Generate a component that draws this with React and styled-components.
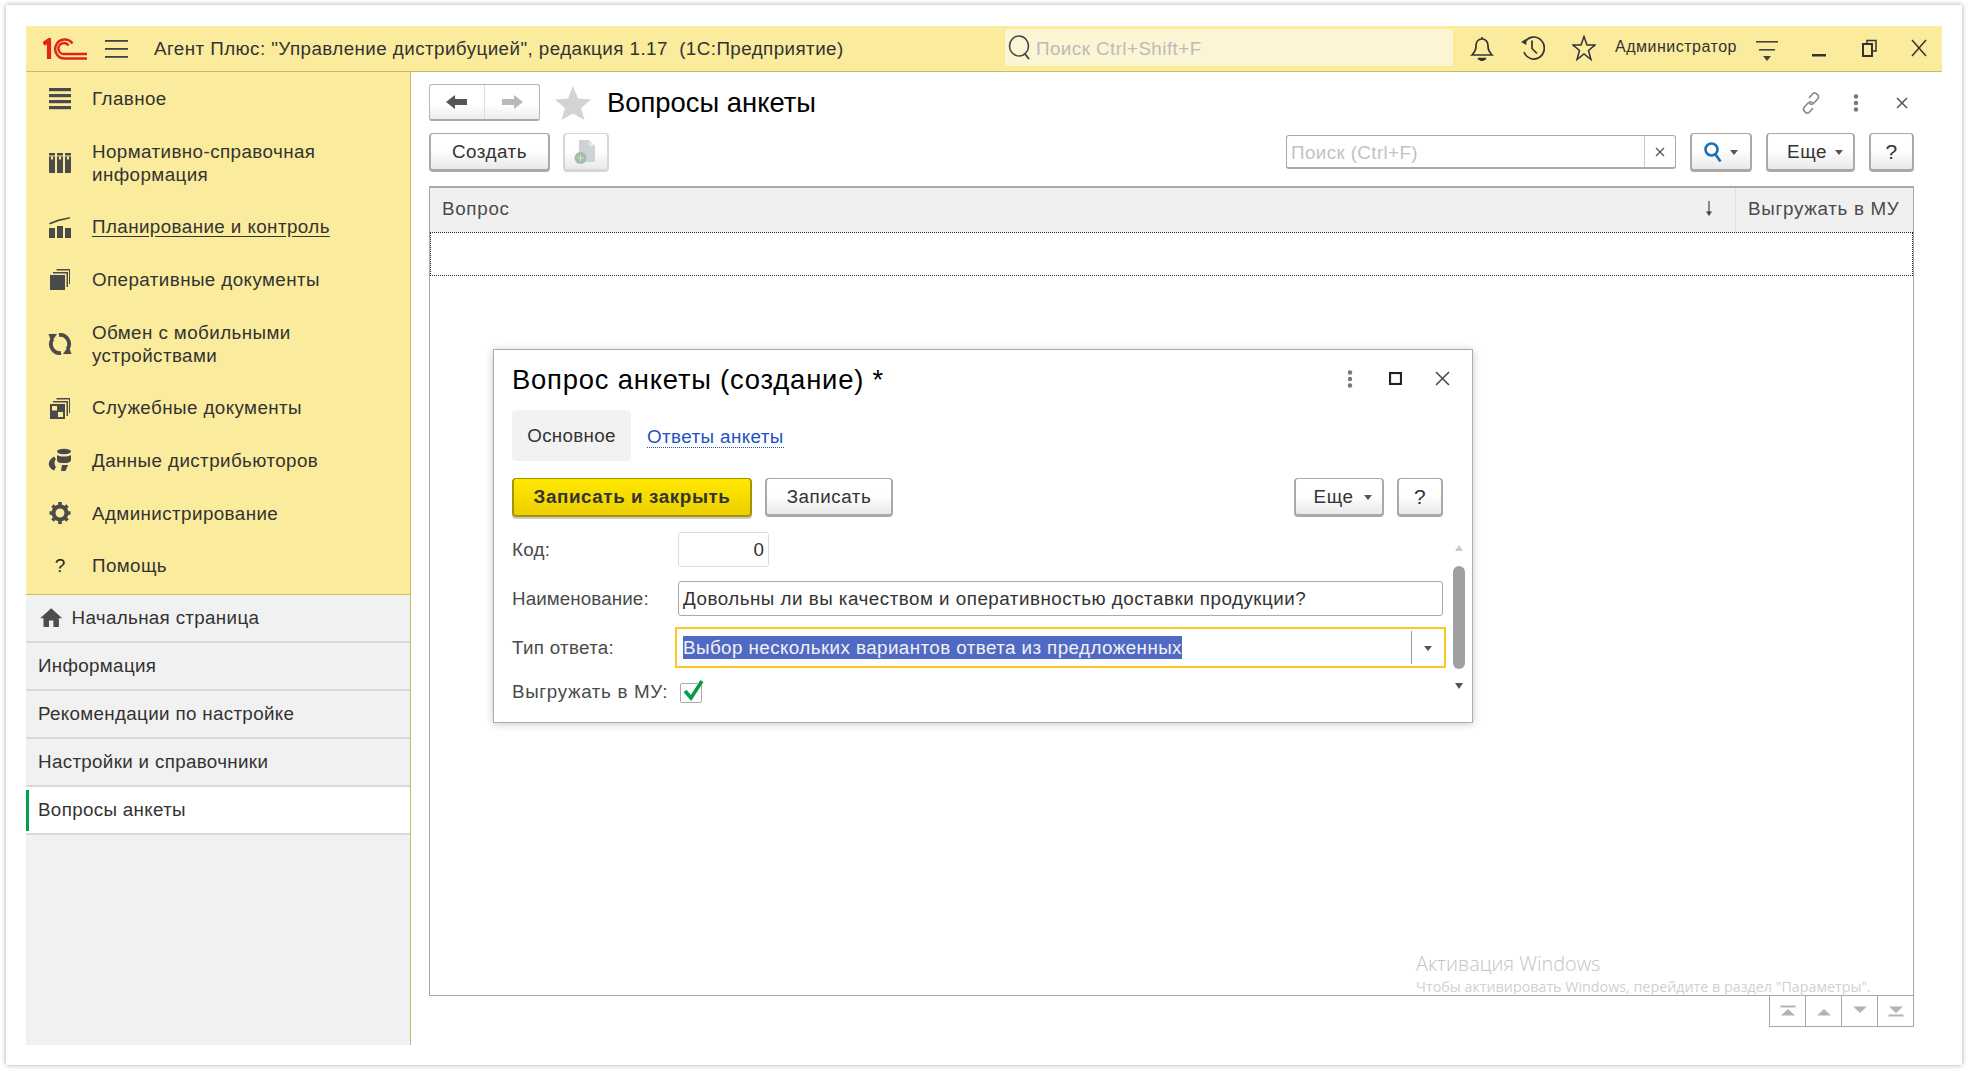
import React from "react";
import styled, { createGlobalStyle } from "styled-components";
import { MdHome } from "react-icons/md";

const Global = createGlobalStyle`
  html, body { margin: 0; padding: 0; background: #fff; }
  body { font-family: "Liberation Sans", Arial, sans-serif; color: #333; }
  * { box-sizing: border-box; }
`;

const Page = styled.div`
  width: 1968px; height: 1071px; padding: 5px 6px 6px; overflow: hidden;
`;
const Frame = styled.div`
  height: 100%; padding: 21px 20px 20px; background: #fff;
  box-shadow: 0 0 5px rgba(0,0,0,.35);
`;
const AppShell = styled.div`
  height: 100%; display: flex; flex-direction: column; position: relative;
`;
const TopBar = styled.header`
  height: 46px; flex: none; display: flex; align-items: center; background: #fbec9d;
  border-bottom: 1px solid #cdbb62; padding: 0 0 2px 17px;
`;
const Logo = styled.svg`width: 44px; height: 22px; flex: none; margin-top: 2px;`;
const Burger = styled.svg`width: 23px; height: 18px; margin-left: 18px; flex: none; margin-top: 2px;`;
const AppTitle = styled.div`
  margin-left: 26px; width: 851px; flex: none; font-size: 18.8px; letter-spacing: .44px; color: #333; white-space: pre; margin-top: 2px;
`;
const GlobalSearch = styled.div`
  width: 448px; height: 37px; flex: none; background: #fcf5d3; border-radius: 2px; display: flex; align-items: center;
  padding-left: 3px; font-size: 18.8px; color: #bbb; letter-spacing: .45px; gap: 5px;
`;
const SearchText = styled.span`margin-top: 2px;`;
const TopIcons = styled.div`
  display: flex; align-items: center; flex: 1; margin-left: 17px; position: relative;
`;
const TopIcon = styled.svg`
  width: 24px; height: 26px; flex: none; margin-right: ${p => p.$gap ?? 27}px; color: #333;
`;
const UserName = styled.div`
  font-size: 16px; color: #333; letter-spacing: .5px; width: 141px; flex: none; margin-top: -2px; margin-left: -6px; white-space: nowrap;
`;
const Body = styled.div`flex: 1; min-height: 0; display: flex;`;
const Sidebar = styled.aside`
  width: 385px; flex: none; display: flex; flex-direction: column; border-right: 1px solid #c9ba66; background: #f1f1f1;
`;
const Sections = styled.nav`background: #fbec9d; border-bottom: 1px solid #c9ba66; height: 523px; flex: none;`;
const SectionRow = styled.div`
  height: ${p => p.$two ? 75.7 : 52.7}px; display: flex; align-items: center; padding-left: 22px;
`;
const SectionIcon = styled.svg`width: 24px; height: 24px; flex: none; color: #4a4a4a;`;
const SectionText = styled.div`
  margin-left: 20px; font-size: 18.8px; line-height: 23px; letter-spacing: .42px; color: #333;
  text-decoration: ${p => p.$u ? "underline" : "none"}; text-underline-offset: 3px;
`;
const OpenRow = styled.div`
  height: 48px; display: flex; align-items: center; gap: ${p => p.$home ? 7.6 : 10}px; font-size: 18.8px; letter-spacing: .33px; color: #333;
  padding: 0 0 0 ${p => p.$home ? 11.6 : 12}px; border-bottom: 2px solid #d9d9d9;
  background: ${p => p.$active ? "linear-gradient(#00a04b,#00a04b) no-repeat 0 3px / 3px 41px, #fff" : "transparent"};
`;
const Main = styled.main`
  flex: 1; min-width: 0; display: flex; flex-direction: column; padding: 12px 28px 18px 18px; background: #fff; position: relative;
`;
const TitleRow = styled.div`height: 37px; display: flex; align-items: center; flex: none;`;
const NavPair = styled.div`
  width: 111px; height: 37px; display: flex; border: 1px solid #b5b5b5; border-bottom: 2px solid #aaa; border-radius: 3px;
  background: linear-gradient(#fff 55%, #eee);
`;
const NavHalf = styled.div`
  flex: 1; display: flex; align-items: center; justify-content: center;
  & + & { border-left: 1px solid #ddd; }
`;
const PageTitle = styled.h1`
  margin: 0 0 0 16px; font-weight: 400; font-size: 27.4px; color: #000; letter-spacing: 0;
`;
const TitleTools = styled.div`
  margin-left: auto; display: flex; align-items: center; margin-right: 6px;
`;
const Toolbar = styled.div`height: 39px; margin-top: 12px; display: flex; align-items: stretch; flex: none;`;
const Btn = styled.div`
  width: ${p => p.$w}px; margin-left: ${p => p.$ml ?? 0}px; flex: none; display: flex; align-items: center; justify-content: center; gap: ${p => p.$gap ?? 8}px;
  padding-left: ${p => p.$pl ?? 0}px;
  border: 2px solid ${p => p.$light ? "#d6d6d6" : "#a9a9a9"}; border-top-width: 1px; border-bottom-width: 3px; border-radius: 4px;
  background: linear-gradient(#fff 45%, #e9e9e9); font-size: ${p => p.$q ? 21 : 18.8}px; letter-spacing: .55px; color: #333; height: 39px;
`;
const Caret = styled.span`
  width: 0; height: 0; border-left: 4px solid transparent; border-right: 4px solid transparent; border-top: 5px solid #555; margin-top: 2px;
`;
const Find = styled.div`
  width: 390px; height: 34px; margin: 2px 0 0 auto; display: flex; border: 1px solid #aaa; border-bottom-width: 2px; border-radius: 3px; background: #fff;
`;
const FindText = styled.div`flex: 1; padding-left: 4px; font-size: 18.8px; letter-spacing: .4px; color: #c2c2c2; line-height: 33px;`;
const FindClear = styled.div`
  width: 31px; border-left: 1px solid #ccc; display: flex; align-items: center; justify-content: center;
`;
const Table = styled.section`
  margin-top: 14px; flex: 1; min-height: 0; border: 1px solid #a8a8a8; border-top-width: 2px; position: relative;
`;
const TableHead = styled.div`height: 44px; background: #f0f0f0; display: flex; font-size: 18.8px; color: #4a4a4a; letter-spacing: .7px; padding-bottom: 2px;`;
const HeadMain = styled.div`flex: 1; display: flex; align-items: center; justify-content: space-between; padding: 0 22px 0 12px;`;
const HeadSide = styled.div`width: 178px; display: flex; align-items: center; padding-left: 12px; border-left: 1px solid #e2e2e2; white-space: nowrap; margin-bottom: -2px; padding-bottom: 2px;`;
const EmptyRow = styled.div`height: 44px; border: 1px dotted #222;`;
const Pager = styled.div`
  align-self: flex-end; display: flex; width: 145px; height: 31px; border: 1px solid #a8a8a8; border-top: 0; flex: none;
`;
const PagerCell = styled.div`
  flex: 1; display: flex; align-items: center; justify-content: center; & + & { border-left: 1px solid #a8a8a8; }
`;
const Watermark = styled.div`
  position: absolute; left: 986px; bottom: -1px; color: #c4c4c4; font-family: "Open Sans", "Liberation Sans", sans-serif; white-space: nowrap; pointer-events: none;
`;
const WmBig = styled.div`font-size: 19.9px; line-height: 27px; font-weight: 300;`;
const WmSmall = styled.div`font-size: 14.3px; line-height: 18px; color: #d0d0d0; margin-top: 1px;`;

const Dialog = styled.section`
  position: absolute; left: 467px; top: 323px; width: 980px; height: 374px; background: #fff; border: 1px solid #ababab;
  box-shadow: 0 1px 8px rgba(0,0,0,.22); padding: 0 23px 0 18px; display: flex; flex-direction: column;
`;
const DialogHead = styled.div`height: 60px; display: flex; align-items: center; flex: none;`;
const DialogTitle = styled.h2`margin: 0; font-weight: 400; font-size: 27.4px; color: #000; letter-spacing: .8px;`;
const DialogTools = styled.div`margin-left: auto; display: flex; align-items: center; margin-top: -3px; margin-right: -1px;`;
const Tabs = styled.div`height: 51px; display: flex; align-items: center; flex: none;`;
const TabOn = styled.div`
  width: 119px; height: 51px; background: #f2f2f2; border-radius: 4px; display: flex; align-items: center; justify-content: center;
  font-size: 18.8px; letter-spacing: .3px; color: #333;
`;
const TabLink = styled.div`
  margin-left: 16px; font-size: 18.8px; letter-spacing: .42px; color: #1e52c4; border-bottom: 1px dotted #1e52c4; line-height: 21px; margin-top: 2px;
`;
const DialogBar = styled.div`height: 39px; margin-top: 17px; display: flex; flex: none;`;
const PrimaryBtn = styled.div`
  width: 240px; height: 39px; display: flex; align-items: center; justify-content: center; border: 2px solid #a59300; border-top-width: 1px; border-bottom-width: 2px;
  box-shadow: 0 2px 0 #ccc; border-radius: 4px; background: linear-gradient(#ffe800, #eccf00); font-weight: 700; font-size: 18.8px; letter-spacing: .6px; color: #333;
`;
const Form = styled.div`
  flex: 1; position: relative; display: flex; flex-direction: column; margin-top: 15px;
`;
const FormRow = styled.div`
  height: ${p => p.$h}px; margin-top: ${p => p.$mt ?? 0}px; display: flex; align-items: center; flex: none;
`;
const Label = styled.div`
  width: 166px; flex: none; font-size: 18.8px; letter-spacing: ${p => p.$ls ?? .3}px; color: #4a4a4a; white-space: nowrap;
`;
const CodeInput = styled.div`
  width: 91px; height: 35px; border: 1px solid #dcdcdc; border-radius: 3px; text-align: right; padding-right: 4px; font-size: 18.8px; line-height: 33px; color: #333;
`;
const NameInput = styled.div`
  width: 765px; height: 35px; border: 1px solid #aaa; border-radius: 3px; padding-left: 4px; font-size: 18.8px; letter-spacing: .5px; line-height: 33px; color: #333; white-space: nowrap;
`;
const TypeInput = styled.div`
  width: 771px; height: 41px; margin-left: -3px; border: 2px solid #fbc91f; display: flex; align-items: center; padding-left: 6px;
`;
const Selected = styled.span`
  background: #5069c4; color: #f2f2f2; font-size: 18.8px; letter-spacing: .43px; line-height: 23px; white-space: nowrap;
`;
const TypeDrop = styled.div`
  margin-left: auto; width: 33px; height: 33px; border-left: 1px solid #999; display: flex; align-items: center; justify-content: center; flex: none;
`;
const CheckBox = styled.div`
  width: 22px; height: 20px; margin-left: 2px; margin-top: 2px; border: 1px solid #aaa; border-radius: 2px; position: relative;
`;
const CheckMark = styled.svg`position: absolute; left: 1px; top: -6px; width: 23px; height: 24px;`;
const ScrollRail = styled.div`
  position: absolute; right: -16px; top: 13px; width: 12px; height: 144px; display: flex; flex-direction: column; align-items: center; justify-content: space-between;
`;
const ScrollThumb = styled.div`width: 12px; height: 103px; background: #9f9f9f; border-radius: 6px; position: absolute; top: 21px; left: 0;`;
const ScrollArrow = styled.span`
  width: 0; height: 0; border-left: 4px solid transparent; border-right: 4px solid transparent;
  ${p => p.$up ? "border-bottom: 6px solid #ccc;" : "border-top: 6px solid #555;"}
`;
const Question = styled.div`width: 24px; text-align: center; font-size: 19px; color: #222;`;

const Stroke = { fill: "none", stroke: "currentColor" };

const sectionIcons = {
  main: <g fill="currentColor"><rect x="1" y="2" width="22" height="3.2"/><rect x="1" y="8" width="22" height="3.2"/><rect x="1" y="14" width="22" height="3.2"/><rect x="1" y="20" width="22" height="3.2"/></g>,
  nsi: <g fill="currentColor"><path d="M1 2h6v20H2a1 1 0 0 1-1-1zM9 2h6v20H9zM17 2h6v19a1 1 0 0 1-1 1h-5z"/><g fill="#fbec9d"><rect x="3" y="5.500" width="2" height="3"/><rect x="11" y="5.500" width="2" height="3"/><rect x="19" y="5.500" width="2" height="3"/><rect x="1" y="4.500" width="22" height="1"/></g></g>,
  plan: <g fill="currentColor"><rect x="1" y="13" width="6" height="10"/><rect x="9" y="11" width="6" height="12"/><rect x="17" y="13" width="6" height="10"/><path d="M1 8 10 4.500l12-2.500v1.600L10.500 6.300 2 9.500z"/></g>,
  docs: <g fill="currentColor"><rect x="2" y="8" width="15" height="15"/><path d="M5 6.500V5h15v15h-1.500V6.500zM8.500 3.500V2H22v15h-1V3.500z"/></g>,
  sync: <g><g fill="none" stroke="currentColor" strokeWidth="3.800"><path d="M4.500 7A9 9 0 0 0 13 21"/><path d="M19.500 17A9 9 0 0 0 11 3"/></g><g fill="currentColor"><path d="M0.500 2H9L3.500 10z"/><path d="M23.500 22H15l5.500-8z"/></g></g>,
  svc: <g fill="currentColor"><path fillRule="evenodd" d="M2 8h15v15H2zM4 10v4.500h5V10zm6 6v5h5v-5z"/><path d="M5 6.500V5h15v15h-1.500V6.500zM8.500 3.500V2H22v15h-1V3.500z"/></g>,
  data: <g fill="currentColor"><ellipse cx="16" cy="3.500" rx="7" ry="2.800"/><path d="M9 7c3 2 11 2 14 0v5c0 2-3 3-4.500 3h-5C11 15 9 14 9 12z"/><path d="M6 8.500 8 11c-2 2-2 6 0 8l-2 3.500C-1 19-1 13 6 8.500z"/><path d="M14 17h6l-2.500 6H13z"/></g>,
  gear: <g><circle cx="12" cy="12" r="6.500" fill="none" stroke="currentColor" strokeWidth="4"/><g stroke="currentColor" strokeWidth="3.600"><path d="M12 1v4M12 19v4M1.500 12h4M18.500 12h4M4.500 4.500l3 3M16.500 16.500l3 3M19.500 4.500l-3 3M7.500 16.500l-3 3"/></g></g>,
};

const sections = [
  { k: "main", t: "Главное" },
  { k: "nsi", t: <>Нормативно-справочная<br />информация</>, two: true },
  { k: "plan", t: "Планирование и контроль", u: true },
  { k: "docs", t: "Оперативные документы" },
  { k: "sync", t: <>Обмен с мобильными<br />устройствами</>, two: true },
  { k: "svc", t: "Служебные документы" },
  { k: "data", t: "Данные дистрибьюторов" },
  { k: "gear", t: "Администрирование" },
];

const Tri = ({ up, bar, color }) => (
  <svg width="16" height="12" viewBox="0 0 16 12">
    <path d={up ? "M1 10.500 8 4l7 6.500z" : "M1 1.500h14L8 8z"} fill={color} />
    {bar && <rect x="0.500" y={up ? 0.5 : 9.5} width="15" height="2" fill={color} />}
  </svg>
);

export default function App() {
  return (
    <Page>
      <Global />
      <Frame>
        <AppShell>
          <TopBar>
            <Logo viewBox="0 0 44 22">
              <g fill="none" stroke="#e1251b" strokeWidth="2.500">
                <path d="M0.500 6 L6 2.200 V21" strokeWidth="4.200" />
                <path d="M29.500 5.500 A9.500 9.500 0 1 0 21.500 20.500 H44" />
                <path d="M25.500 7.500 A5.500 5.500 0 1 0 21.500 16 H44" />
              </g>
            </Logo>
            <Burger viewBox="0 0 23 18"><g fill="#444"><rect y="0" width="23" height="1.800"/><rect y="8" width="23" height="1.800"/><rect y="16" width="23" height="1.800"/></g></Burger>
            <AppTitle>Агент Плюс: "Управление дистрибуцией", редакция 1.17  (1С:Предприятие)</AppTitle>
            <GlobalSearch>
              <svg width="23" height="27" viewBox="0 0 23 27" fill="none" stroke="#444" strokeWidth="1.600"><ellipse cx="11" cy="12" rx="9.500" ry="10"/><path d="M17 20l4 5" strokeWidth="2"/></svg>
              <SearchText>Поиск Ctrl+Shift+F</SearchText>
            </GlobalSearch>
            <TopIcons>
              <TopIcon viewBox="0 0 24 26" style={Stroke} strokeWidth="1.700">
                <path d="M12 2v2M12 4c-4 0-6 3-6 7 0 5-2 7-4 9h20c-2-2-4-4-4-9 0-4-2-7-6-7z"/><path d="M8 23.500h8l-4 2z" fill="currentColor"/>
              </TopIcon>
              <TopIcon viewBox="0 0 24 26" style={Stroke} strokeWidth="1.700">
                <path d="M4 7A10.500 11 0 1 1 3 17"/><path d="M0 7l5-3 .500 6z" fill="currentColor" stroke="none"/><path d="M11 5.500 v8l5 5"/>
              </TopIcon>
              <TopIcon viewBox="0 0 24 26" style={Stroke} strokeWidth="1.500" $gap={25}>
                <path d="M12 1.500l3 8.500h8l-6.500 5.500 2.500 9-7-5.500-7 5.500 2.500-9L1 10h8z"/>
              </TopIcon>
              <UserName>Администратор</UserName>
              <svg width="22" height="22" viewBox="0 0 22 22" style={{ flex: "none", marginTop: 7 }}>
                <g fill="#444"><rect width="22" height="1.600" y="1"/><rect x="3" width="16" height="1.600" y="9"/><path d="M7 16h8l-4 5z"/></g>
              </svg>
              <svg width="14" height="20" viewBox="0 0 14 20" style={{ flex: "none", marginLeft: 34 }}><rect y="16" width="14" height="2.500" fill="#333"/></svg>
              <svg width="15" height="18" viewBox="0 0 15 18" fill="none" stroke="#333" strokeWidth="2" style={{ flex: "none", marginLeft: 36 }}><rect x="1" y="5" width="9" height="12"/><path d="M5 5V1.500h9V12h-4" strokeWidth="1.500"/></svg>
              <svg width="16" height="20" viewBox="0 0 16 20" fill="none" stroke="#333" strokeWidth="1.500" style={{ flex: "none", marginLeft: 34 }}><path d="M1 2l14 16M15 2 1 18"/></svg>
            </TopIcons>
          </TopBar>
          <Body>
            <Sidebar>
              <Sections>
                {sections.map(s => (
                  <SectionRow key={s.k} $two={s.two}>
                    <SectionIcon viewBox="0 0 24 24">{sectionIcons[s.k]}</SectionIcon>
                    <SectionText $u={s.u}>{s.t}</SectionText>
                  </SectionRow>
                ))}
                <SectionRow>
                  <Question>?</Question>
                  <SectionText>Помощь</SectionText>
                </SectionRow>
              </Sections>
              <OpenRow $home><MdHome size={26.4} color="#4d4d4d" />Начальная страница</OpenRow>
              <OpenRow>Информация</OpenRow>
              <OpenRow>Рекомендации по настройке</OpenRow>
              <OpenRow>Настройки и справочники</OpenRow>
              <OpenRow $active>Вопросы анкеты</OpenRow>
            </Sidebar>
            <Main>
              <TitleRow>
                <NavPair>
                  <NavHalf>
                    <svg width="22" height="16" viewBox="0 0 22 16"><path d="M0 8l9-7v4h12v6H9v4z" fill="#555"/></svg>
                  </NavHalf>
                  <NavHalf>
                    <svg width="22" height="16" viewBox="0 0 22 16"><path d="M22 8l-9-7v4H1v6h12v4z" fill="#b9b9b9"/></svg>
                  </NavHalf>
                </NavPair>
                <svg width="36" height="34" viewBox="0 0 36 34" style={{ marginLeft: 15, flex: "none" }}><path d="M18 0l5 12.500 13 1-10 8.500 3.500 12L18 27.500 6.500 34 10 22 0 13.500l13-1z" fill="#d3d3d3"/></svg>
                <PageTitle>Вопросы анкеты</PageTitle>
                <TitleTools>
                  <svg width="24" height="24" viewBox="0 0 24 24" fill="none" stroke="#8a8a8a" strokeWidth="1.600" style={{ marginRight: 30 }}>
                    <path d="M10 7l4-4.500c2-2 7 2 5 5l-4 4.500c-2 2-4 1-5 0"/><path d="M14 17l-4 4.500c-2 2-7-2-5-5l4-4.500c2-2 4-1 5 0"/>
                  </svg>
                  <svg width="6" height="18" viewBox="0 0 6 18" fill="#777" style={{ marginRight: 37 }}><circle cx="3" cy="2.500" r="2.200"/><circle cx="3" cy="9" r="2.200"/><circle cx="3" cy="15.500" r="2.200"/></svg>
                  <svg width="12" height="12" viewBox="0 0 12 12" fill="none" stroke="#555" strokeWidth="1.500"><path d="M1 1l10 10M11 1 1 11"/></svg>
                </TitleTools>
              </TitleRow>
              <Toolbar>
                <Btn $w={121}>Создать</Btn>
                <Btn $w={46} $ml={13} $light>
                  <svg width="26" height="28" viewBox="0 0 26 28">
                    <path d="M6 2h10l6 6v16H6z" fill="#ced3d6"/><path d="M16 2l6 6h-6z" fill="#e6e8ea"/>
                    <circle cx="7.500" cy="20" r="6" fill="#a3bda6"/><path d="M4 20h7M7.500 16.500v7" stroke="#d6e2d7" strokeWidth="1"/>
                  </svg>
                </Btn>
                <Find>
                  <FindText>Поиск (Ctrl+F)</FindText>
                  <FindClear><svg width="10" height="10" viewBox="0 0 10 10" stroke="#555" strokeWidth="1.300"><path d="M1 1l8 8M9 1 1 9"/></svg></FindClear>
                </Find>
                <Btn $w={62} $ml={14}>
                  <svg width="18" height="20" viewBox="0 0 18 20" fill="none" stroke="#1d6fb5" strokeWidth="2.600"><ellipse cx="7.500" cy="7.500" rx="6" ry="6"/><path d="M11.500 12.500l5 7"/></svg>
                  <Caret />
                </Btn>
                <Btn $w={89} $ml={14} $pl={9}>Еще<Caret /></Btn>
                <Btn $w={45} $ml={14} $q>?</Btn>
              </Toolbar>
              <Table>
                <TableHead>
                  <HeadMain>
                    <span>Вопрос</span>
                    <svg width="8" height="16" viewBox="0 0 8 16" fill="#444"><rect x="3.400" y="0" width="1.200" height="12"/><path d="M1 10.500h6L4 15z"/></svg>
                  </HeadMain>
                  <HeadSide>Выгружать в МУ</HeadSide>
                </TableHead>
                <EmptyRow />
                <Watermark>
                  <WmBig>Активация Windows</WmBig>
                  <WmSmall>Чтобы активировать Windows, перейдите в раздел "Параметры".</WmSmall>
                </Watermark>
              </Table>
              <Pager>
                <PagerCell><Tri up bar color="#b3b3b3" /></PagerCell>
                <PagerCell><Tri up color="#b3b3b3" /></PagerCell>
                <PagerCell><Tri color="#b3b3b3" /></PagerCell>
                <PagerCell><Tri bar color="#b3b3b3" /></PagerCell>
              </Pager>
            </Main>
          </Body>
          <Dialog>
            <DialogHead>
              <DialogTitle>Вопрос анкеты (создание) *</DialogTitle>
              <DialogTools>
                <svg width="6" height="18" viewBox="0 0 6 18" fill="#777" style={{ marginRight: 36 }}><circle cx="3" cy="2.500" r="2.200"/><circle cx="3" cy="9" r="2.200"/><circle cx="3" cy="15.500" r="2.200"/></svg>
                <svg width="13" height="13" viewBox="0 0 13 13" fill="none" stroke="#222" strokeWidth="2.200" style={{ marginRight: 33 }}><rect x="1" y="1" width="11" height="11"/></svg>
                <svg width="15" height="15" viewBox="0 0 15 15" fill="none" stroke="#444" strokeWidth="1.500"><path d="M1 1l13 13M14 1 1 14"/></svg>
              </DialogTools>
            </DialogHead>
            <Tabs>
              <TabOn>Основное</TabOn>
              <TabLink>Ответы анкеты</TabLink>
            </Tabs>
            <DialogBar>
              <PrimaryBtn>Записать и закрыть</PrimaryBtn>
              <Btn $w={128} $ml={13}>Записать</Btn>
              <Btn $w={90} $ml={401} $pl={8} $gap={11}>Еще<Caret /></Btn>
              <Btn $w={46} $ml={13} $q>?</Btn>
            </DialogBar>
            <Form>
              <FormRow $h={35}>
                <Label>Код:</Label>
                <CodeInput>0</CodeInput>
              </FormRow>
              <FormRow $h={35} $mt={14}>
                <Label $ls={.1}>Наименование:</Label>
                <NameInput>Довольны ли вы качеством и оперативностью доставки продукции?</NameInput>
              </FormRow>
              <FormRow $h={41} $mt={11}>
                <Label>Тип ответа:</Label>
                <TypeInput>
                  <Selected>Выбор нескольких вариантов ответа из предложенных</Selected>
                  <TypeDrop><Caret /></TypeDrop>
                </TypeInput>
              </FormRow>
              <FormRow $h={32} $mt={8}>
                <Label $ls={.65}>Выгружать в МУ:</Label>
                <CheckBox>
                  <CheckMark viewBox="0 0 23 24"><path d="M3 13l6 7L20 3" fill="none" stroke="#0a9a4c" strokeWidth="3.600"/></CheckMark>
                </CheckBox>
              </FormRow>
              <ScrollRail>
                <ScrollArrow $up />
                <ScrollThumb />
                <ScrollArrow />
              </ScrollRail>
            </Form>
          </Dialog>
        </AppShell>
      </Frame>
    </Page>
  );
}
